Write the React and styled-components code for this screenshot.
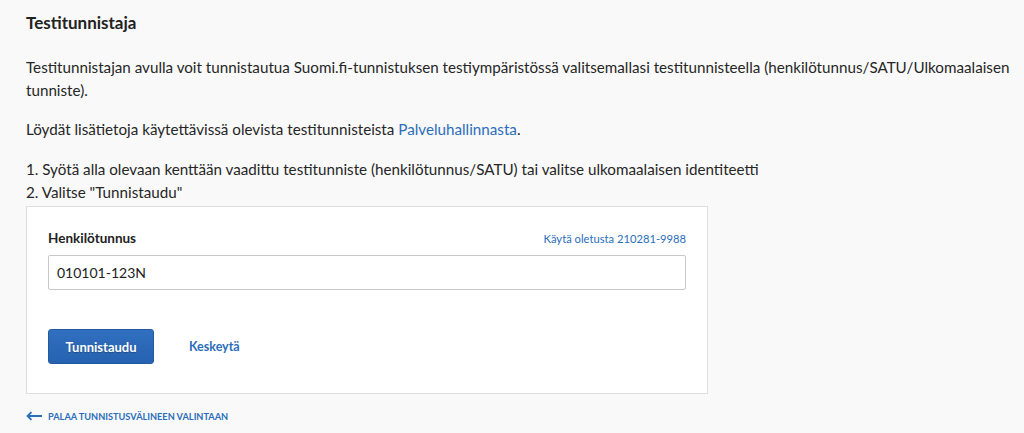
import React from "react";
import styled, { createGlobalStyle } from "styled-components";

const Global = createGlobalStyle`
  html, body { margin: 0; padding: 0; background: #f9f9f9; }
  body { font-family: "Lato", "Open Sans", sans-serif; color: #222; }
`;

const Page = styled.main`
  padding: 11px 0 0 26px;
  width: 996px;
`;

const Heading = styled.h1`
  margin: 0;
  font-size: 17px;
  line-height: 24px;
  font-weight: 700;
  color: #222;
`;

const Para = styled.p`
  margin: ${(p) => p.$mt}px 0 0;
  font-size: 15.2px;
  line-height: 23px;
  color: #262626;
`;

const Link = styled.a`
  color: #2a6ebb;
  text-decoration: none;
`;

const Card = styled.section`
  margin-top: 2px;
  width: 638px;
  background: #fff;
  border: 1px solid #dedede;
  padding: 21px 21px 29px;
`;

const LabelRow = styled.div`
  display: flex;
  justify-content: space-between;
  align-items: center;
  height: 20px;
`;

const Label = styled.label`
  font-size: 13.5px;
  font-weight: 700;
  color: #222;
`;

const SmallLink = styled.a`
  font-size: 11.2px;
  color: #2a6ebb;
  text-decoration: none;
`;

const Input = styled.input`
  box-sizing: border-box;
  display: block;
  margin-top: 7px;
  width: 100%;
  height: 35px;
  border: 1px solid #c8c8c8;
  border-radius: 2px;
  padding: 0 8px;
  font-family: inherit;
  font-size: 14px;
  color: #222;
  background: #fff;
  outline: none;
`;

const Actions = styled.div`
  display: flex;
  align-items: center;
  gap: 35px;
  margin-top: 39px;
`;

const Primary = styled.button`
  width: 106px;
  height: 35px;
  border: 1px solid #2359a0;
  border-radius: 3px;
  background: linear-gradient(#3170bf, #2562b0);
  color: #fff;
  font-family: inherit;
  font-size: 13px;
  font-weight: 700;
  text-shadow: 0 1px 1px rgba(0,0,0,0.25);
`;

const Cancel = styled.a`
  font-size: 12.5px;
  font-weight: 700;
  color: #2a6ebb;
  text-decoration: none;
`;

const Back = styled.a`
  display: flex;
  align-items: center;
  gap: 6px;
  margin-top: 14px;
  height: 16px;
  font-size: 9.2px;
  font-weight: 700;
  text-transform: uppercase;
  color: #2a6ebb;
  text-decoration: none;
`;

export default function App() {
  return (
    <>
      <Global />
      <Page>
        <Heading>Testitunnistaja</Heading>
        <Para $mt={21}>
          Testitunnistajan avulla voit tunnistautua Suomi.fi-tunnistuksen testiympäristössä valitsemallasi testitunnisteella (henkilötunnus/SATU/Ulkomaalaisen tunniste).
        </Para>
        <Para $mt={16}>
          Löydät lisätietoja käytettävissä olevista testitunnisteista <Link href="#">Palveluhallinnasta</Link>.
        </Para>
        <Para $mt={17}>
          1. Syötä alla olevaan kenttään vaadittu testitunniste (henkilötunnus/SATU) tai valitse ulkomaalaisen identiteetti
          <br />
          2. Valitse "Tunnistaudu"
        </Para>
        <Card>
          <LabelRow>
            <Label htmlFor="hetu">Henkilötunnus</Label>
            <SmallLink href="#">Käytä oletusta 210281-9988</SmallLink>
          </LabelRow>
          <Input id="hetu" defaultValue="010101-123N" />
          <Actions>
            <Primary>Tunnistaudu</Primary>
            <Cancel href="#">Keskeytä</Cancel>
          </Actions>
        </Card>
        <Back href="#">
          <svg width="16" height="10" viewBox="0 0 16 10" fill="none">
            <path d="M16 5H2M5.5 1.2L1.5 5l4 3.8" stroke="#2a6ebb" strokeWidth="1.8" />
          </svg>
          Palaa tunnistusvälineen valintaan
        </Back>
      </Page>
    </>
  );
}
